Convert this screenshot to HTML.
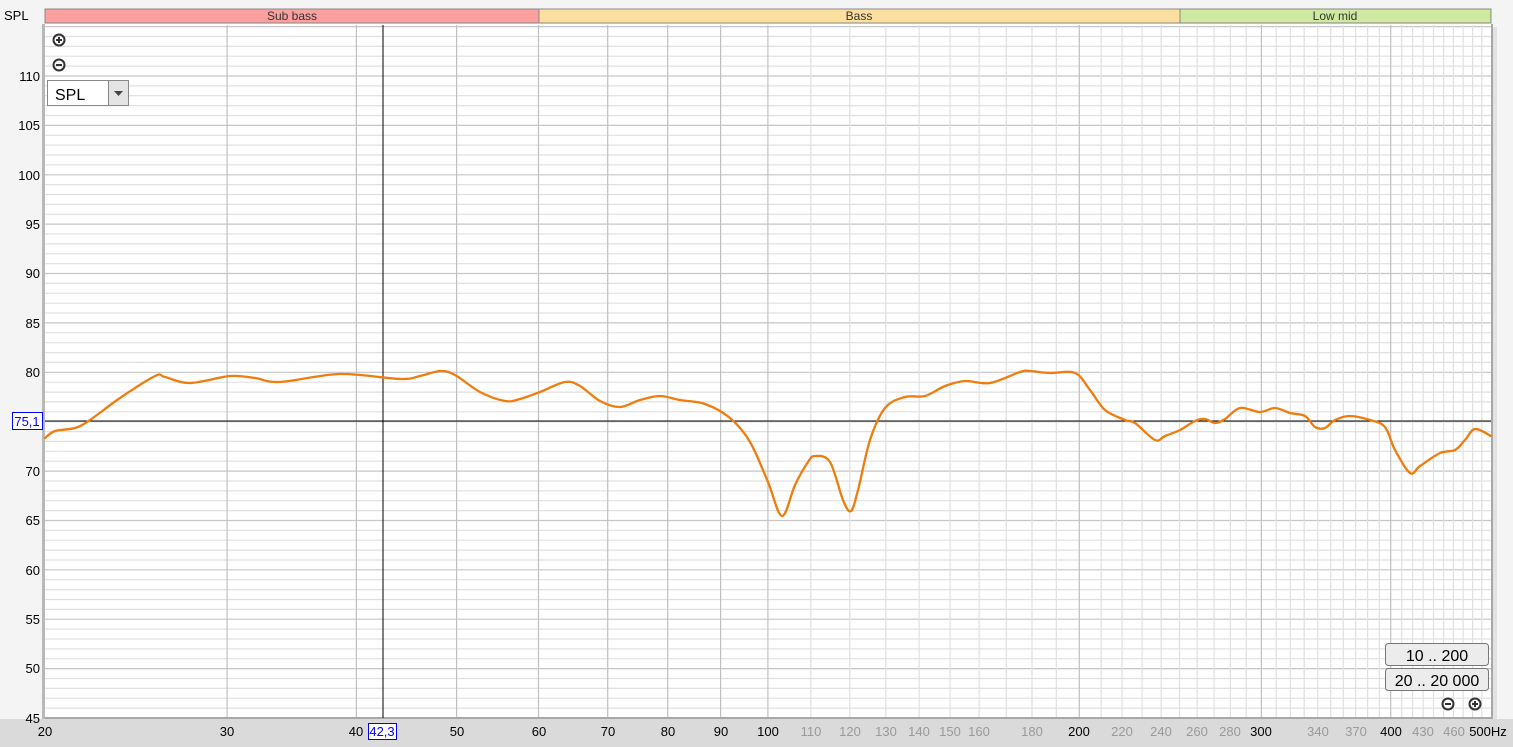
<!DOCTYPE html>
<html><head><meta charset="utf-8"><style>
html,body{margin:0;padding:0;}
body{width:1513px;height:747px;overflow:hidden;background:#f4f4f4;font-family:"Liberation Sans",sans-serif;position:relative;}
.b{position:absolute;}
</style></head><body>
<div class="b" style="left:0;top:719px;width:1513px;height:28px;background:#dadada"></div>
<svg class="b" style="left:0;top:0" width="1513" height="747" xmlns="http://www.w3.org/2000/svg" font-family="Liberation Sans, sans-serif">
<rect x="45" y="9" width="494" height="14" fill="#fc9f9f" stroke="#888" stroke-width="1"/>
<rect x="539" y="9" width="641" height="14" fill="#fbdf9f" stroke="#888" stroke-width="1"/>
<rect x="1180" y="9" width="311" height="14" fill="#d0e9a0" stroke="#888" stroke-width="1"/>
<g font-size="12" fill="#333" text-anchor="middle"><text x="292" y="20">Sub bass</text><text x="859" y="20">Bass</text><text x="1335" y="20">Low mid</text></g>
<text x="4" y="20" font-size="13" fill="#000">SPL</text>
<rect x="1493" y="27" width="4" height="692" fill="#e2e2e2"/>
<rect x="45" y="24" width="1446" height="694" fill="#fff"/>
<g id="grid"></g>
<rect x="42" y="24" width="3" height="695" fill="#b8b8b8"/>
<rect x="1491" y="24" width="2" height="695" fill="#a8a8a8"/>
<rect x="45" y="717" width="1448" height="2" fill="#a8a8a8"/>
<line x1="383" y1="25" x2="383" y2="718" stroke="#000" stroke-width="1"/>
<line x1="45" y1="421" x2="1491" y2="421" stroke="#000" stroke-width="1"/>
<path id="curve" fill="none" stroke="#ee7d0e" stroke-width="2.3" stroke-linejoin="round" stroke-linecap="round" d=""/>
<g font-size="13" fill="#000" text-anchor="end">
<text x="40" y="81">110</text><text x="40" y="130">105</text><text x="40" y="180">100</text><text x="40" y="229">95</text><text x="40" y="278">90</text><text x="40" y="328">85</text><text x="40" y="377">80</text><text x="40" y="476">70</text><text x="40" y="525">65</text><text x="40" y="575">60</text><text x="40" y="624">55</text><text x="40" y="673">50</text><text x="40" y="723">45</text>
</g>
<rect x="12.5" y="412.5" width="30" height="17" fill="#fff" stroke="#00f"/>
<text x="27" y="426" font-size="13" fill="#00f" text-anchor="middle">75,1</text>
<g font-size="13" text-anchor="middle" fill="#000">
<text x="45" y="736">20</text><text x="227" y="736">30</text><text x="356" y="736">40</text><text x="457" y="736">50</text><text x="539" y="736">60</text><text x="608" y="736">70</text><text x="668" y="736">80</text><text x="721" y="736">90</text><text x="768" y="736">100</text><text x="1079" y="736">200</text><text x="1261" y="736">300</text><text x="1391" y="736">400</text><text x="1488" y="736">500Hz</text>
</g>
<g font-size="13" text-anchor="middle" fill="#999">
<text x="811" y="736">110</text><text x="850" y="736">120</text><text x="886" y="736">130</text><text x="919" y="736">140</text><text x="950" y="736">150</text><text x="979" y="736">160</text><text x="1032" y="736">180</text><text x="1122" y="736">220</text><text x="1161" y="736">240</text><text x="1197" y="736">260</text><text x="1230" y="736">280</text><text x="1318" y="736">340</text><text x="1356" y="736">370</text><text x="1423" y="736">430</text><text x="1454" y="736">460</text>
</g>
<rect x="368.5" y="723.5" width="28" height="16" fill="#fff" stroke="#00f"/>
<text x="382" y="736" font-size="13" fill="#00f" text-anchor="middle">42,3</text>
<g stroke="#333" stroke-width="2" fill="none">
<circle cx="59" cy="40" r="5.5"/><line x1="56" y1="40" x2="62" y2="40"/><line x1="59" y1="37" x2="59" y2="43"/>
<circle cx="59" cy="65" r="5.5"/><line x1="56" y1="65" x2="62" y2="65"/>
<circle cx="1448" cy="704" r="5.5"/><line x1="1445" y1="704" x2="1451" y2="704"/>
<circle cx="1475" cy="704" r="5.5"/><line x1="1472" y1="704" x2="1478" y2="704"/><line x1="1475" y1="701" x2="1475" y2="707"/>
</g>
<rect x="47.5" y="80.5" width="81" height="25" fill="#fff" stroke="#888"/>
<rect x="108.5" y="80.5" width="20" height="25" fill="#e4e4e4" stroke="#888"/>
<path d="M114 91 L123 91 L118.5 96 Z" fill="#444"/>
<text x="55" y="100" font-size="16" fill="#000">SPL</text>
<rect x="1385.5" y="643.5" width="103" height="22" rx="3" fill="#ececec" stroke="#777"/>
<rect x="1385.5" y="668.5" width="103" height="22" rx="3" fill="#ececec" stroke="#777"/>
<text x="1437" y="661" font-size="16" text-anchor="middle" fill="#000">10 .. 200</text>
<text x="1437" y="686" font-size="16" text-anchor="middle" fill="#000">20 .. 20 000</text>
</svg>
<script>
(function(){
var g=document.getElementById('grid'),s='';
function X(f){return 45+1034.3*Math.log10(f/20);}
for(var d=46;d<=115;d++){var y=718-(d-45)*9.877;var maj=d%5==0;s+='<line x1="45" x2="1491" y1="'+y.toFixed(1)+'" y2="'+y.toFixed(1)+'" stroke="'+(maj?'#c6c6c6':'#e0e0e0')+'" stroke-width="1.2"/>';}
for(var f=30;f<500;f+=10){var x=X(f);var maj=(f<=100)||f%100==0;s+='<line y1="25" y2="718" x1="'+x.toFixed(1)+'" x2="'+x.toFixed(1)+'" stroke="'+(maj?'#c0c0c0':'#e0e0e0')+'" stroke-width="1.2"/>';}
g.innerHTML=s;
var p=[45,438,55,431,75,428,90,420,120,398,155,376,165,377,190,383,230,376,255,378,280,382,340,374,400,379,420,376,440,371,455,375,480,392,505,401,520,399,540,392,565,382,580,386,600,401,620,407,640,400,660,396,680,400,705,404,730,418,750,442,768,482,782,516,795,485,808,462,815,456,830,462,843,500,851,511,858,490,870,440,885,408,905,397,925,396,945,386,965,381,990,383,1020,372,1030,371,1050,373,1075,373,1090,390,1105,410,1125,420,1135,423,1155,440,1165,436,1180,430,1195,421,1205,419,1215,423,1225,419,1240,408,1260,412,1275,408,1290,413,1305,416,1315,427,1325,428,1335,420,1350,416,1370,420,1385,427,1395,450,1410,473,1420,466,1440,453,1455,450,1465,440,1475,429,1491,436];
var pts=[];for(var i=0;i<p.length;i+=2)pts.push([p[i],p[i+1]]);
var d='M'+pts[0][0]+' '+pts[0][1];
for(var i=0;i<pts.length-1;i++){var p0=pts[i-1]||pts[i],p1=pts[i],p2=pts[i+1],p3=pts[i+2]||p2;
var c1=[p1[0]+(p2[0]-p0[0])/6,p1[1]+(p2[1]-p0[1])/6],c2=[p2[0]-(p3[0]-p1[0])/6,p2[1]-(p3[1]-p1[1])/6];
d+=' C'+c1[0].toFixed(1)+' '+c1[1].toFixed(1)+' '+c2[0].toFixed(1)+' '+c2[1].toFixed(1)+' '+p2[0]+' '+p2[1];}
document.getElementById('curve').setAttribute('d',d);
})();
</script>
</body></html>
